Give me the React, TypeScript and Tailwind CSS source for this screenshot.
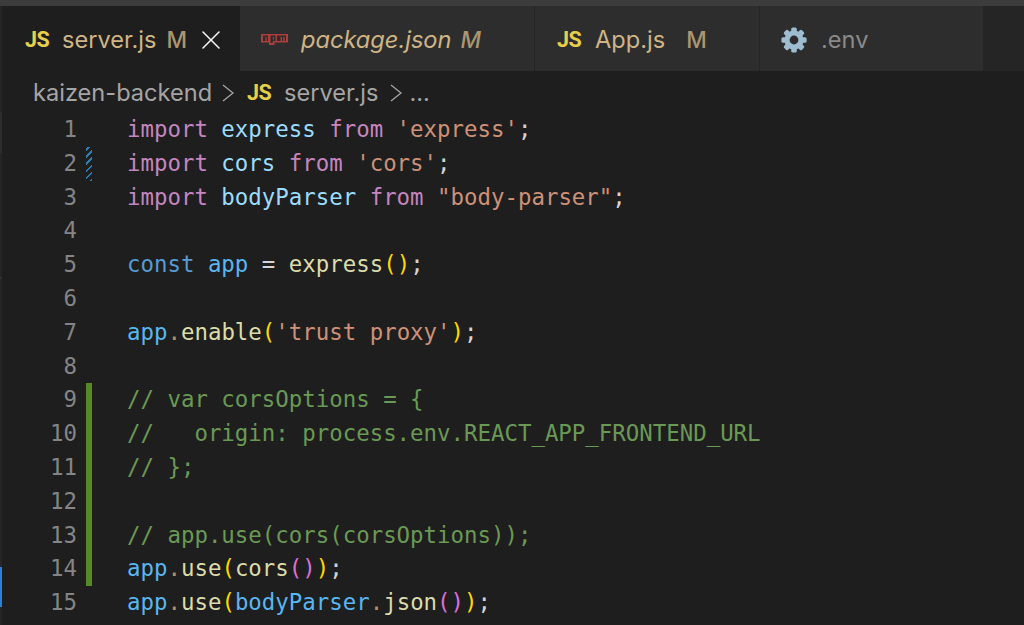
import { X } from "lucide-react";

type Tok = [string, string];

const KW = "text-[#c586c0]";
const VAR = "text-[#9cdcfe]";
const STR = "text-[#ce9178]";
const CONST = "text-[#569cd6]";
const OBJ = "text-[#5ab6f0]";
const FN = "text-[#dcdcaa]";
const GOLD = "text-[#ffd700]";
const PINK = "text-[#da70d6]";
const COM = "text-[#6a9955]";
const DOT = "text-[#b5915f]";
const TXT = "text-[#d4d4d4]";

const lines: Tok[][] = [
  [["import", KW], [" express ", VAR], ["from", KW], [" 'express'", STR], [";", TXT]],
  [["import", KW], [" cors ", VAR], ["from", KW], [" 'cors'", STR], [";", TXT]],
  [["import", KW], [" bodyParser ", VAR], ["from", KW], [' "body-parser"', STR], [";", TXT]],
  [],
  [["const", CONST], [" app", OBJ], [" = ", TXT], ["express", FN], ["()", GOLD], [";", TXT]],
  [],
  [["app", OBJ], [".", DOT], ["enable", FN], ["(", GOLD], ["'trust proxy'", STR], [")", GOLD], [";", TXT]],
  [],
  [["// var corsOptions = {", COM]],
  [["//   origin: process.env.REACT_APP_FRONTEND_URL", COM]],
  [["// };", COM]],
  [],
  [["// app.use(cors(corsOptions));", COM]],
  [["app", OBJ], [".", DOT], ["use", FN], ["(", GOLD], ["cors", FN], ["()", PINK], [")", GOLD], [";", TXT]],
  [["app", OBJ], [".", DOT], ["use", FN], ["(", GOLD], ["bodyParser", OBJ], [".", DOT], ["json", FN], ["()", PINK], [")", GOLD], [";", TXT]],
];

const JsIcon = () => (
  <span className="w-[22px] shrink-0 font-['Roboto',sans-serif] font-bold text-[#e6d04a] text-[21.5px] leading-none tracking-[-0.6px]">
    JS
  </span>
);

const NpmIcon = () => (
  <svg width="27" height="11" viewBox="0 0 27 11" className="shrink-0">
    <path fill="#b03c3c" d="M0 0h27v8.5H13.5V11H8V8.5H0z" />
    <path fill="#2d2d2d" d="M2 1.5h5v5.5H5.7V3H4.4v4H2zM9.5 1.5h5v5.5h-2.7V9h-2.3zM11.8 3v2.6h1.2V3zM16 1.5h9v5.5h-1.3V3h-1.4v4H21V3h-1.4v4H16z" />
  </svg>
);

const GearIcon = () => (
  <svg width="26" height="26" viewBox="0 0 26 26" className="shrink-0">
    <g fill="#9fbdd0">
      <circle cx="13" cy="13" r="9.6" />
      {[0, 45, 90, 135].map((a) => (
        <rect key={a} x="10.2" y="0.4" width="5.6" height="25.2" rx="1.6" transform={`rotate(${a} 13 13)`} />
      ))}
    </g>
    <circle cx="13" cy="13" r="4.4" fill="#2d2d2d" />
  </svg>
);

const Chevron = () => (
  <svg width="12" height="20" viewBox="0 0 12 20" className="shrink-0" fill="none" stroke="#a5a5a5" strokeWidth="1.3">
    <path d="M1 2l10 8-10 8" />
  </svg>
);

export default function App() {
  return (
    <div className="h-[625px] w-[1024px] overflow-hidden bg-[#1e1e1e] flex flex-col font-['Inter',sans-serif]">
      <div className="h-[6px] bg-[#3c3c3c] shrink-0" />

      <div className="flex-1 flex min-h-0">
        {/* left edge of the sidebar */}
        <div className="w-[2px] shrink-0 bg-[#252526] flex flex-col">
          <div className="h-[106px]" />
          <div className="h-[41px] bg-[#2c2c31]" />
          <div className="h-[124px]" />
          <div className="h-[2px] bg-[#333333]" />
          <div className="h-[288px]" />
          <div className="h-[40px] bg-[#2f7fd0]" />
        </div>

        <div className="flex-1 flex flex-col min-w-0">
          {/* tabs */}
          <div className="h-[65px] shrink-0 flex bg-[#252526] text-[23.6px] text-[#cfb585]">
            <div className="w-[238px] bg-[#1e1e1e] flex items-center pl-[23px] pt-[2px]">
              <JsIcon />
              <span className="ml-[15px]">server.js</span>
              <span className="ml-[10px] font-medium text-[#ab9670] text-[22.5px]">M</span>
              <X size={32} strokeWidth={1.2} className="ml-[8px] text-[#f0f0f0]" />
            </div>
            <div className="w-[294px] bg-[#2d2d2d] flex items-center pl-[21px] pt-[2px]">
              <NpmIcon />
              <span className="ml-[13px] italic">package.json</span>
              <span className="ml-[9px] italic font-medium text-[#ab9670] text-[22.5px]">M</span>
            </div>
            <div className="w-[225px] bg-[#2d2d2d] border-l border-[#252525] flex items-center pl-[22px] pt-[2px]">
              <JsIcon />
              <span className="ml-[16px]">App.js</span>
              <span className="ml-[21px] font-medium text-[#ab9670] text-[22.5px]">M</span>
            </div>
            <div className="w-[224px] bg-[#2d2d2d] border-l border-[#252525] flex items-center pl-[21px] pt-[2px]">
              <GearIcon />
              <span className="ml-[14px] text-[#8a8a8a]">.env</span>
            </div>
          </div>

          {/* breadcrumbs */}
          <div className="h-[42px] shrink-0 flex items-center pl-[31px] pt-[2px] text-[23.6px] text-[#a5a5a5]">
            <span>kaizen-backend</span>
            <div className="ml-[10px] mr-[13px]"><Chevron /></div>
            <JsIcon />
            <span className="ml-[15px]">server.js</span>
            <div className="ml-[11px] mr-[8px]"><Chevron /></div>
            <span>...</span>
          </div>

          {/* code */}
          <div className="flex-1 font-['DejaVu_Sans_Mono',monospace] text-[22.4px]">
            {lines.map((toks, i) => {
              const n = i + 1;
              const green = n >= 9 && n <= 14;
              return (
                <div key={n} className="h-[33.8px] flex items-center whitespace-pre">
                  <div className="w-[75px] text-right text-[#858585] shrink-0">{n}</div>
                  <div className="w-[50px] h-full shrink-0 pl-[9px]">
                    {green && <div className="w-[6px] h-full bg-[#568a26]" />}
                    {n === 2 && (
                      <div className="w-[6px] h-full bg-[repeating-linear-gradient(-45deg,#2a7fb0_0px,#2a7fb0_2px,transparent_2px,transparent_5px)]" />
                    )}
                  </div>
                  <div>
                    {toks.map(([t, c], j) => (
                      <span key={j} className={c}>{t}</span>
                    ))}
                  </div>
                </div>
              );
            })}
          </div>
        </div>
      </div>
    </div>
  );
}
